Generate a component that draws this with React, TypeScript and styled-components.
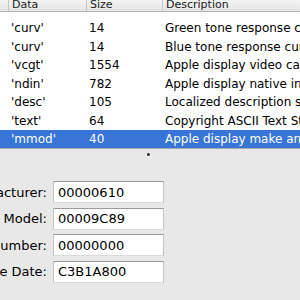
import React from 'react'
import styled, {createGlobalStyle} from 'styled-components'

const GlobalStyle = createGlobalStyle`
    html, body {
        margin: 0;
        padding: 0;
        background: #e8e8e8;
    }
`

const Window = styled.div`
    width: 300px;
    height: 300px;
    overflow: hidden;
    display: flex;
    flex-direction: column;
    background: #e8e8e8;
    font-family: 'DejaVu Sans', 'Liberation Sans', sans-serif;
`

const Table = styled.div`
    height: 148px;
    background: #ffffff;
    border-bottom: 1px solid #a9a9a9;
    overflow: hidden;
    display: flex;
    flex-direction: column;
`

const Columns = '8px 78px 76px 1fr'

const Header = styled.div`
    display: grid;
    grid-template-columns: ${Columns};
    height: 11px;
    background: linear-gradient(#f4f4f4, #e4e4e4);
    border-bottom: 1px solid #b3b3b3;
    flex-shrink: 0;
`

const HeaderCell = styled.div`
    font-size: 11px;
    line-height: 9px;
    color: #1a1a1a;
    padding-left: 3px;
    border-left: 1px solid #c6c6c6;
    white-space: nowrap;
    overflow: hidden;

    &:first-child {
        border-left: none;
    }
`

const Body = styled.div`
    padding-top: 7px;
`

const Row = styled.div<{selected?: boolean}>`
    display: grid;
    grid-template-columns: ${Columns};
    height: 18.5px;
    align-items: center;
    font-size: 12px;
    color: ${(props) => (props.selected ? '#ffffff' : '#000000')};
    background: ${(props) => (props.selected ? '#3875d7' : 'transparent')};
`

const Cell = styled.div`
    padding-left: 3px;
    white-space: nowrap;
    overflow: hidden;
`

const Splitter = styled.div`
    height: 10px;
    display: flex;
    justify-content: center;
    align-items: center;
    flex-shrink: 0;
`

const Dimple = styled.div`
    width: 3px;
    height: 3px;
    margin-left: -4px;
    border-radius: 50%;
    background: #2a2a2a;
    box-shadow: 1px 1px 0 #ffffff;
`

const Form = styled.div`
    display: grid;
    grid-template-columns: 47px 111px;
    column-gap: 6px;
    row-gap: 4.5px;
    padding-top: 22px;
    align-items: center;
    font-size: 13px;
`

const Label = styled.div`
    display: flex;
    justify-content: flex-end;
    overflow: hidden;
    color: #000000;
`

const LabelText = styled.span`
    flex-shrink: 0;
    white-space: nowrap;
`

const Field = styled.div`
    height: 22px;
    box-sizing: border-box;
    background: #ffffff;
    border: 1px solid #c3c3c3;
    border-top-color: #9b9b9b;
    border-bottom-color: #dadada;
    padding-left: 4px;
    display: flex;
    align-items: center;
    color: #000000;
`

const rows = [
    {data: "'curv'", size: '14', description: 'Green tone response curve'},
    {data: "'curv'", size: '14', description: 'Blue tone response curve'},
    {data: "'vcgt'", size: '1554', description: 'Apple display video card gamma'},
    {data: "'ndin'", size: '782', description: 'Apple display native information'},
    {data: "'desc'", size: '105', description: 'Localized description strings'},
    {data: "'text'", size: '64', description: 'Copyright ASCII Text String'},
    {data: "'mmod'", size: '40', description: 'Apple display make and model'},
]

const fields = [
    {label: 'Manufacturer:', value: '00000610'},
    {label: 'Model:', value: '00009C89'},
    {label: 'Serial Number:', value: '00000000'},
    {label: 'Manufacture Date:', value: 'C3B1A800'},
]

export default function App() {
    return (
        <Window>
            <GlobalStyle />
            <Table>
                <Header>
                    <HeaderCell />
                    <HeaderCell>Data</HeaderCell>
                    <HeaderCell>Size</HeaderCell>
                    <HeaderCell>Description</HeaderCell>
                </Header>
                <Body>
                    {rows.map((row, i) => (
                        <Row key={i} selected={i === rows.length - 1}>
                            <Cell />
                            <Cell>{row.data}</Cell>
                            <Cell>{row.size}</Cell>
                            <Cell>{row.description}</Cell>
                        </Row>
                    ))}
                </Body>
            </Table>
            <Splitter>
                <Dimple />
            </Splitter>
            <Form>
                {fields.map((f) => (
                    <React.Fragment key={f.label}>
                        <Label>
                            <LabelText>{f.label}</LabelText>
                        </Label>
                        <Field>{f.value}</Field>
                    </React.Fragment>
                ))}
            </Form>
        </Window>
    )
}
